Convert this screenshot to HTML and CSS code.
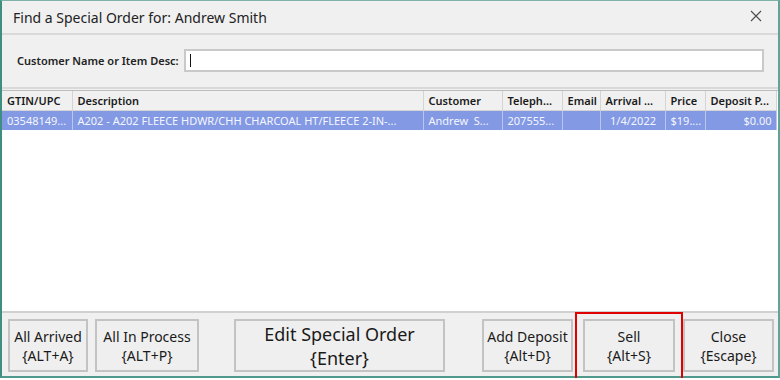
FILE: index.html
```html
<!DOCTYPE html>
<html lang="en">
<head>
    <meta charset="UTF-8">
    <meta name="viewport" content="width=device-width, initial-scale=1.0">
    <title>Find a Special Order</title>
    <link rel="stylesheet" href="styles.css">
</head>
<body>
    <div class="window">
        <div class="titlebar">
            <span class="title">Find a Special Order for: Andrew Smith</span>
            <svg class="close-x" width="12" height="12" viewBox="0 0 12 12">
                <path d="M1 1 L11 11 M11 1 L1 11" stroke="#4a4a4a" stroke-width="1.1" fill="none"/>
            </svg>
        </div>
        <div class="search">
            <label for="busca">Customer Name or Item Desc:</label>
            <div class="input-box"><span class="caret"></span></div>
        </div>
        <div class="grid">
            <table>
                <colgroup>
                    <col style="width:70px">
                    <col style="width:351px">
                    <col style="width:79px">
                    <col style="width:60px">
                    <col style="width:38px">
                    <col style="width:65px">
                    <col style="width:40px">
                    <col style="width:71px">
                </colgroup>
                <thead>
                    <tr>
                        <th>GTIN/UPC</th>
                        <th>Description</th>
                        <th>Customer</th>
                        <th>Teleph...</th>
                        <th>Email</th>
                        <th>Arrival ...</th>
                        <th>Price</th>
                        <th>Deposit P...</th>
                    </tr>
                </thead>
                <tbody>
                    <tr class="sel">
                        <td>03548149...</td>
                        <td>A202 - A202 FLEECE HDWR/CHH CHARCOAL HT/FLEECE 2-IN-...</td>
                        <td>Andrew&nbsp; S...</td>
                        <td>207555...</td>
                        <td></td>
                        <td class="center">1/4/2022</td>
                        <td>$19....</td>
                        <td class="right">$0.00</td>
                    </tr>
                </tbody>
            </table>
        </div>
        <div class="buttons">
            <button class="b-arrived">All Arrived<br>{ALT+A}</button>
            <button class="b-process">All In Process<br>{ALT+P}</button>
            <button class="b-edit">Edit Special Order<br>{Enter}</button>
            <button class="b-deposit">Add Deposit<br>{Alt+D}</button>
            <button class="b-sell">Sell<br>{Alt+S}</button>
            <button class="b-close">Close<br>{Escape}</button>
        </div>
        <div class="highlight"></div>
    </div>
</body>
</html>
```

FILE: styles.css
```css
body, html {
    margin: 0;
    background-color: #ffffff;
    font-family: "Noto Sans", "Open Sans", sans-serif;
}

.window {
    position: relative;
    width: 780px;
    height: 378px;
    box-sizing: border-box;
    background-color: #f0f0f0;
    border: 1px solid #7fb3aa;
    border-left: 2px solid #3f8f80;
    border-right: 2px solid #5ea596;
    border-bottom: 2px solid #4f9a8c;
    display: flex;
    flex-direction: column;
    overflow: visible;
}

.titlebar {
    height: 32px;
    display: flex;
    align-items: center;
    justify-content: space-between;
    padding: 0 16px 0 11px;
    border-bottom: 2px solid #d9d9d9;
}

.title {
    font-size: 14px;
    color: #222;
}

.close-x {
    margin-top: -2px;
}

.search {
    height: 52px;
    display: flex;
    align-items: center;
    padding-left: 15px;
    border-bottom: 2px solid #d9d9d9;
}

.search label {
    font-size: 11px;
    font-weight: 600;
    color: #222;
    margin-right: 5px;
    margin-top: -2px;
}

.input-box {
    width: 572px;
    height: 19px;
    background-color: #fff;
    border: 2px solid #c9c9c9;
    display: flex;
    align-items: center;
    padding-left: 4px;
    margin-top: -2px;
}

.caret {
    width: 1px;
    height: 13px;
    background-color: #111;
}

.grid {
    height: 220px;
    margin: 1px 0 0 0;
    background-color: #fff;
    border-bottom: 2px solid #d0d0d0;
    border-top: 1px solid #bdbdbd;
}

table {
    table-layout: fixed;
    border-collapse: collapse;
    width: 774px;
}

th, td {
    white-space: nowrap;
    overflow: hidden;
    font-size: 11px;
    height: 19px;
    padding: 0 4px 0 5px;
    text-align: left;
}

th {
    font-weight: 600;
    color: #1a1a1a;
    background-color: #f0f0f0;
    border-right: 1px solid #d4d4d4;
    border-bottom: 1px solid #d4d4d4;
}

td {
    color: #f4f6ff;
    border-right: 1px solid #b9c6f2;
}

tr.sel {
    background-color: #8399e4;
}

td.center {
    text-align: center;
}

td.right {
    text-align: right;
}

.buttons {
    flex: 1;
    display: flex;
    align-items: center;
    padding-left: 6px;
}

button {
    height: 53px;
    margin-top: 2px;
    background-color: #efefef;
    border: 2px solid #c3c3c3;
    font-family: "Noto Sans", "Open Sans", sans-serif;
    font-size: 14px;
    line-height: 19px;
    color: #1a1a1a;
    padding: 0;
    cursor: pointer;
}

.b-arrived { width: 80px; }
.b-process { width: 104px; margin-left: 7px; }
.b-edit { width: 211px; margin-left: 35px; font-size: 18px; line-height: 24px; }
.b-deposit { width: 91px; margin-left: 37px; }
.b-sell { width: 92px; margin-left: 10px; }
.b-close { width: 91px; margin-left: 8px; }

.highlight {
    position: absolute;
    left: 573px;
    top: 311px;
    width: 104px;
    height: 80px;
    border: 2px solid #e00000;
}
```
